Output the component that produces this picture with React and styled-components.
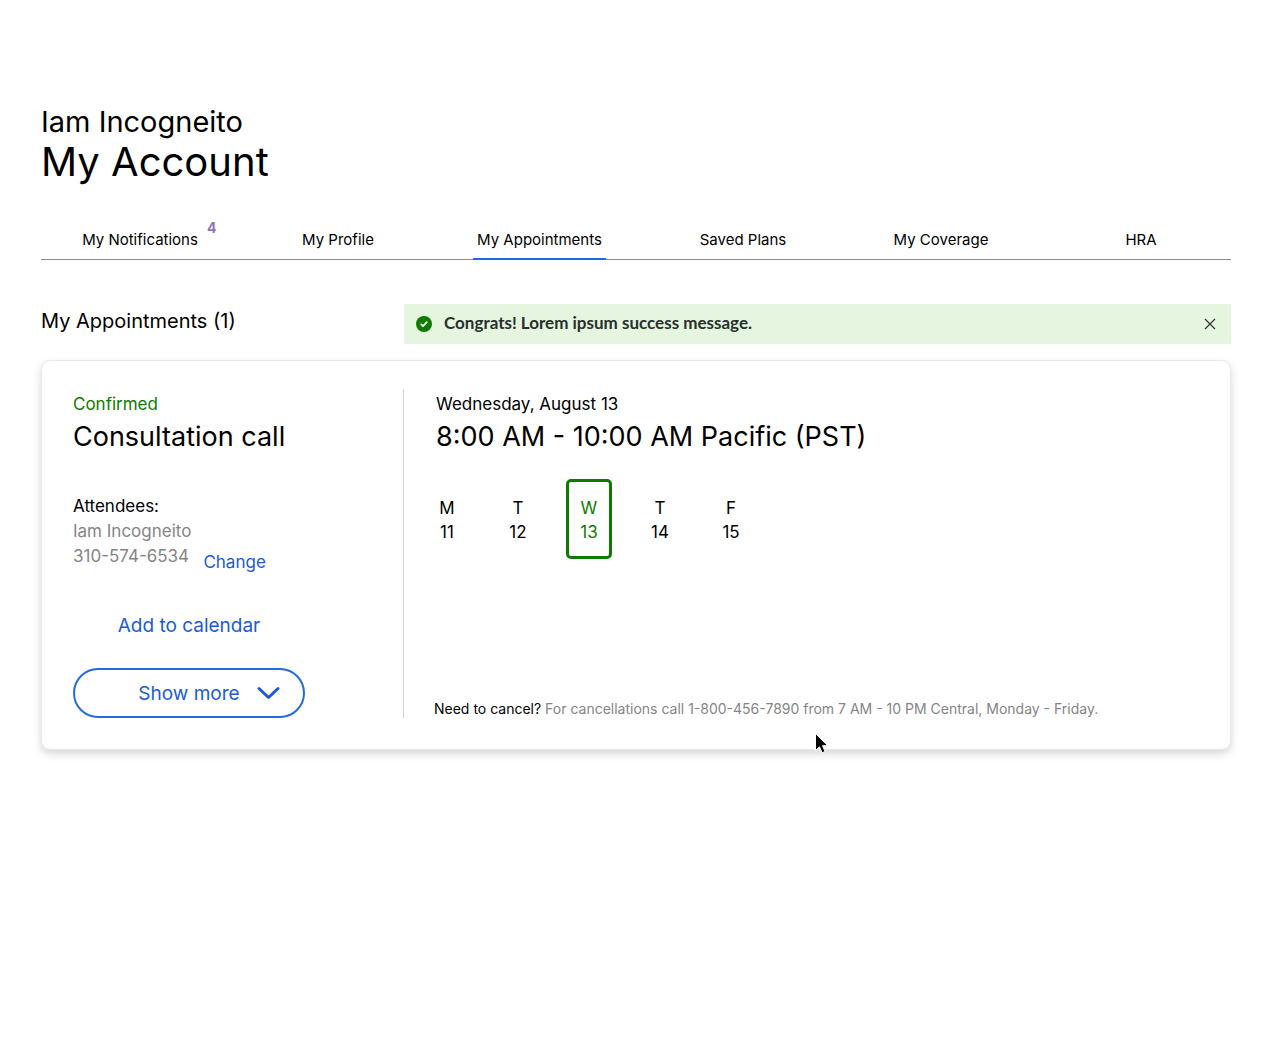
import React, { useState } from 'react';
import styled, { createGlobalStyle } from 'styled-components';

const GlobalStyle = createGlobalStyle`
  * {
    box-sizing: border-box;
  }

  body {
    margin: 0;
    background-color: #fff;
    color: #000;
    font-family: Inter, 'Liberation Sans', sans-serif;
  }

  h1, h2, h3, p, ul, ol {
    margin: 0;
    padding: 0;
    font-weight: 400;
    list-style: none;
  }
`;

const Page = styled.main`
  position: relative;
  padding: 102px 40px 40px 41px;
`;

const UserName = styled.p`
  font-size: 29px;
  line-height: 40px;
`;

const PageTitle = styled.h1`
  font-size: 40px;
  line-height: 40px;
`;

const Tabs = styled.nav`
  margin-top: 38px;
  border-bottom: 1px solid #8c8c8c;
`;

const TabList = styled.ul`
  display: grid;
  grid-template-columns: 198fr 198fr 205fr 202fr 194fr 206fr;
  justify-items: center;
  margin-right: -13px;
`;

const Tab = styled.a`
  position: relative;
  display: block;
  height: 40px;
  margin-bottom: -1px;
  padding: 0 4px;
  font-size: 15px;
  line-height: 40px;
  color: #000;
  text-decoration: none;
  border-bottom: 2px solid ${({ $active }) => ($active ? '#1f6ae0' : 'transparent')};
`;

const Badge = styled.span`
  position: absolute;
  top: -2px;
  left: calc(100% + 5px);
  font-size: 14px;
  font-weight: 700;
  line-height: 20px;
  color: #9670b8;
`;

const SectionHeader = styled.header`
  display: grid;
  grid-template-columns: 363px 1fr;
  height: 40px;
  margin-top: 44px;
`;

const SectionTitle = styled.h2`
  font-size: 20px;
  line-height: 34px;
`;

const Alert = styled.div`
  display: flex;
  align-items: center;
  gap: 12px;
  padding: 0 13px 0 12px;
  background-color: #e5f5e0;
`;

const AlertText = styled.p`
  flex: 1;
  padding-bottom: 2px;
  font-family: Lato, 'Open Sans', sans-serif;
  font-size: 17px;
  font-weight: 700;
  line-height: 24px;
  color: #28302c;
`;

const CloseButton = styled.button`
  display: flex;
  padding: 0;
  border: 0;
  background: none;
  cursor: pointer;
`;

const Card = styled.section`
  display: grid;
  grid-template-columns: 330px 1fr;
  margin-top: 16px;
  padding: 28px 31px 31px;
  background-color: #fff;
  border: 1px solid #e8e8e8;
  border-radius: 9px;
  box-shadow: 0 4px 8px rgba(0, 0, 0, 0.16);
`;

const Summary = styled.div`
  display: flex;
  flex-direction: column;
  align-items: flex-start;
  min-height: 329px;
`;

const Details = styled.div`
  display: flex;
  flex-direction: column;
  padding-left: 20px;
  border-left: 1px solid #d4d4d4;
`;

const Heading = styled.div`
  padding-left: ${({ $inset }) => ($inset ? '12px' : '0')};
`;

const Label = styled.p`
  font-size: 17px;
  line-height: 30px;
  color: ${({ $color }) => $color || '#000'};
`;

const Title = styled.h3`
  font-size: 27px;
  line-height: 36px;
`;

const Attendees = styled.div`
  display: flex;
  align-items: flex-end;
  gap: 12px;
  margin-top: 39px;
  font-size: 17px;
  line-height: 25px;
`;

const Muted = styled.p`
  color: #858585;
`;

const LinkButton = styled.button`
  padding: 0;
  border: 0;
  background: none;
  font-family: inherit;
  font-size: ${({ $large }) => ($large ? '19px' : '17px')};
  line-height: ${({ $large }) => ($large ? '24px' : '14px')};
  color: #1a5cd0;
  cursor: pointer;
`;

const Actions = styled.div`
  display: flex;
  flex-direction: column;
  align-items: center;
  gap: 30px;
  width: 232px;
  margin-top: auto;
`;

const ShowMore = styled.button`
  display: grid;
  grid-template-columns: 1fr auto 1fr;
  align-items: center;
  width: 100%;
  height: 50px;
  padding: 0;
  border: 2px solid #236be0;
  border-radius: 25px;
  background-color: #fff;
  font-family: inherit;
  font-size: 19px;
  color: #1a5cd0;
  cursor: pointer;

  span {
    grid-column: 2;
  }

  svg {
    margin-left: 17px;
  }
`;

const Days = styled.ol`
  display: flex;
  gap: 25px;
  margin-top: 24px;
`;

const Day = styled.li`
  display: flex;
  flex-direction: column;
  align-items: center;
  justify-content: center;
  width: 46px;
  height: 80px;
  padding-top: 2px;
  border: 3px solid ${({ $selected }) => ($selected ? '#0e7a00' : 'transparent')};
  border-radius: 5px;
  font-size: 17px;
  line-height: 24px;
  color: ${({ $selected }) => ($selected ? '#0e7a00' : '#000')};
`;

const CancelNote = styled.p`
  margin-top: auto;
  padding-left: 10px;
  font-size: 14px;
  line-height: 18px;
  color: #858585;

  strong {
    font-weight: 400;
    color: #000;
  }
`;

const Pointer = styled.svg`
  position: absolute;
  top: 731px;
  left: 813px;
  pointer-events: none;
`;

const tabs = [
  { label: 'My Notifications', count: 4 },
  { label: 'My Profile' },
  { label: 'My Appointments', active: true },
  { label: 'Saved Plans' },
  { label: 'My Coverage' },
  { label: 'HRA' },
];

const days = [
  { name: 'M', date: 11 },
  { name: 'T', date: 12 },
  { name: 'W', date: 13, selected: true },
  { name: 'T', date: 14 },
  { name: 'F', date: 15 },
];

function SuccessAlert({ onClose }) {
  return (
    <Alert role="status">
      <svg width="16" height="16" viewBox="0 0 16 16" aria-hidden="true">
        <circle cx="8" cy="8" r="8" fill="#0e7a00" />
        <path
          d="M5.2 8.3l1.8 1.8 3.8-3.9"
          fill="none"
          stroke="#fff"
          strokeWidth="1.7"
          strokeLinecap="round"
          strokeLinejoin="round"
        />
      </svg>
      <AlertText>Congrats! Lorem ipsum success message.</AlertText>
      <CloseButton type="button" aria-label="Close" onClick={onClose}>
        <svg width="16" height="16" viewBox="0 0 16 16">
          <path d="M3 3l10 10M13 3L3 13" stroke="#333" strokeWidth="1.2" />
        </svg>
      </CloseButton>
    </Alert>
  );
}

function App() {
  const [showAlert, setShowAlert] = useState(true);

  return (
    <>
      <GlobalStyle />
      <Page>
        <UserName>Iam Incogneito</UserName>
        <PageTitle>My Account</PageTitle>

        <Tabs>
          <TabList>
            {tabs.map((tab) => (
              <li key={tab.label}>
                <Tab href="#" $active={tab.active}>
                  {tab.label}
                  {tab.count && <Badge>{tab.count}</Badge>}
                </Tab>
              </li>
            ))}
          </TabList>
        </Tabs>

        <SectionHeader>
          <SectionTitle>My Appointments (1)</SectionTitle>
          {showAlert && <SuccessAlert onClose={() => setShowAlert(false)} />}
        </SectionHeader>

        <Card>
          <Summary>
            <Heading>
              <Label $color="#0e7a00">Confirmed</Label>
              <Title>Consultation call</Title>
            </Heading>
            <Attendees>
              <div>
                <p>Attendees:</p>
                <Muted>Iam Incogneito</Muted>
                <Muted>310-574-6534</Muted>
              </div>
              <LinkButton type="button">Change</LinkButton>
            </Attendees>
            <Actions>
              <LinkButton type="button" $large>Add to calendar</LinkButton>
              <ShowMore type="button">
                <span>Show more</span>
                <svg width="23" height="14" viewBox="0 0 23 14" aria-hidden="true">
                  <path
                    d="M2 2.5l9.5 9 9.5-9"
                    fill="none"
                    stroke="#1a5cd0"
                    strokeWidth="3"
                    strokeLinecap="round"
                    strokeLinejoin="round"
                  />
                </svg>
              </ShowMore>
            </Actions>
          </Summary>

          <Details>
            <Heading $inset>
              <Label>Wednesday, August 13</Label>
              <Title>8:00 AM - 10:00 AM Pacific (PST)</Title>
            </Heading>
            <Days>
              {days.map((day) => (
                <Day key={day.date} $selected={day.selected}>
                  <span>{day.name}</span>
                  <span>{day.date}</span>
                </Day>
              ))}
            </Days>
            <CancelNote>
              <strong>Need to cancel?</strong> For cancellations call 1-800-456-7890 from 7 AM - 10 PM
              Central, Monday - Friday.
            </CancelNote>
          </Details>
        </Card>

        <Pointer width="18" height="24" viewBox="0 0 18 24" aria-hidden="true">
          <path
            d="M2.5 2.5v17l4-3.7 2.6 6 3-1.3-2.6-5.8h5.3z"
            fill="#000"
            stroke="#fff"
            strokeWidth="1"
          />
        </Pointer>
      </Page>
    </>
  );
}

export default App;
